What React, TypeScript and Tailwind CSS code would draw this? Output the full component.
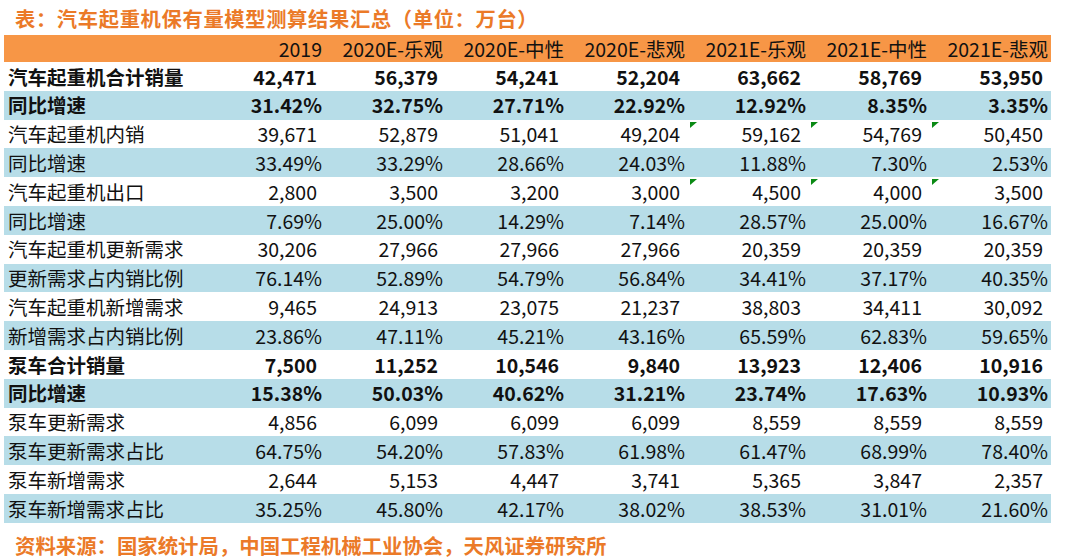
type Row = {
  label: string;
  bold?: boolean;
  flags?: boolean;
  values: string[];
};

const headers = [
  "2019",
  "2020E-乐观",
  "2020E-中性",
  "2020E-悲观",
  "2021E-乐观",
  "2021E-中性",
  "2021E-悲观",
];

const rows: Row[] = [
  { label: "汽车起重机合计销量", bold: true, values: ["42,471", "56,379", "54,241", "52,204", "63,662", "58,769", "53,950"] },
  { label: "同比增速", bold: true, values: ["31.42%", "32.75%", "27.71%", "22.92%", "12.92%", "8.35%", "3.35%"] },
  { label: "汽车起重机内销", flags: true, values: ["39,671", "52,879", "51,041", "49,204", "59,162", "54,769", "50,450"] },
  { label: "同比增速", values: ["33.49%", "33.29%", "28.66%", "24.03%", "11.88%", "7.30%", "2.53%"] },
  { label: "汽车起重机出口", flags: true, values: ["2,800", "3,500", "3,200", "3,000", "4,500", "4,000", "3,500"] },
  { label: "同比增速", values: ["7.69%", "25.00%", "14.29%", "7.14%", "28.57%", "25.00%", "16.67%"] },
  { label: "汽车起重机更新需求", values: ["30,206", "27,966", "27,966", "27,966", "20,359", "20,359", "20,359"] },
  { label: "更新需求占内销比例", values: ["76.14%", "52.89%", "54.79%", "56.84%", "34.41%", "37.17%", "40.35%"] },
  { label: "汽车起重机新增需求", values: ["9,465", "24,913", "23,075", "21,237", "38,803", "34,411", "30,092"] },
  { label: "新增需求占内销比例", values: ["23.86%", "47.11%", "45.21%", "43.16%", "65.59%", "62.83%", "59.65%"] },
  { label: "泵车合计销量", bold: true, values: ["7,500", "11,252", "10,546", "9,840", "13,923", "12,406", "10,916"] },
  { label: "同比增速", bold: true, values: ["15.38%", "50.03%", "40.62%", "31.21%", "23.74%", "17.63%", "10.93%"] },
  { label: "泵车更新需求", values: ["4,856", "6,099", "6,099", "6,099", "8,559", "8,559", "8,559"] },
  { label: "泵车更新需求占比", values: ["64.75%", "54.20%", "57.83%", "61.98%", "61.47%", "68.99%", "78.40%"] },
  { label: "泵车新增需求", values: ["2,644", "5,153", "4,447", "3,741", "5,365", "3,847", "2,357"] },
  { label: "泵车新增需求占比", values: ["35.25%", "45.80%", "42.17%", "38.02%", "38.53%", "31.01%", "21.60%"] },
];

// excel's little green "number stored as text" marker
function Flag() {
  return (
    <svg className="absolute left-[2px] top-[2px]" width="7" height="6" viewBox="0 0 7 6">
      <polygon points="0,0 7,0 0,6" fill="#0a8a14" />
    </svg>
  );
}

export default function App() {
  return (
    <div
      className="h-[560px] w-[1080px] bg-white text-[#111]"
      style={{ fontFamily: '"Noto Sans CJK SC", "Noto Sans", sans-serif' }}
    >
      <div className="flex h-[35px] items-center pl-[15px] pt-[2px] text-[20.3px] font-bold tracking-[0.65px] text-[#eb7a28]">
        表：汽车起重机保有量模型测算结果汇总（单位：万台）
      </div>

      <div className="ml-[4px] w-[1047px]">
        <div className="grid h-[27px] grid-cols-[200px_repeat(7,121px)] items-center bg-[#f79646] text-[19.5px] leading-none">
          <div />
          {headers.map((h) => (
            <div key={h} className="pr-[3px] text-right">
              {h}
            </div>
          ))}
        </div>

        {rows.map((r, i) => (
          <div
            key={i}
            className={
              "grid h-[28.8px] grid-cols-[200px_repeat(7,121px)] items-center text-[19.5px] leading-none " +
              (i % 2 === 1 ? "bg-[#b7dde8] " : "bg-white ") +
              (r.bold ? "font-bold" : "font-normal")
            }
          >
            <div className="pl-[4px]">{r.label}</div>
            {r.values.map((v, j) => (
              <div
                key={j}
                className={
                  "relative flex h-full items-center justify-end " +
                  (v.endsWith("%") ? "pr-[3px]" : "pr-[8px]")
                }
              >
                {r.flags && j >= 4 && <Flag />}
                {v}
              </div>
            ))}
          </div>
        ))}
      </div>

      <div className="flex h-[36px] items-center pl-[15px] pt-[9px] text-[20.4px] font-bold text-[#eb7a28]">
        资料来源：国家统计局，中国工程机械工业协会，天风证券研究所
      </div>
    </div>
  );
}
